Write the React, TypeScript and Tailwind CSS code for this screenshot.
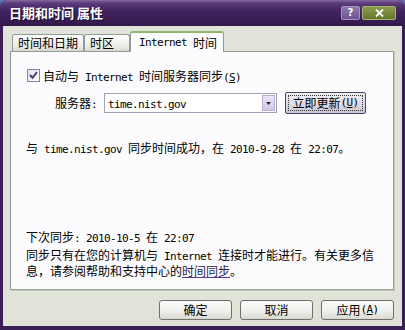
import React from "react";

const CJK = /([\u2E80-\u9FFF\u3000-\u303F\uFF00-\uFFEF]+)/;

function T({ s }: { s: string }) {
  const parts = s.split(CJK).filter((p) => p.length > 0);
  return (
    <>
      {parts.map((p, i) =>
        CJK.test(p) ? (
          <span key={i} className="font-['Noto_Sans_CJK_SC',sans-serif] text-[12px]">
            {p}
          </span>
        ) : (
          <span key={i} className="font-['DejaVu_Sans_Mono',monospace] text-[11px] tracking-[-0.62px] whitespace-pre">
            {p}
          </span>
        )
      )}
    </>
  );
}

function M({ children }: { children: React.ReactNode }) {
  return (
    <span className="font-['DejaVu_Sans_Mono',monospace] text-[11px] tracking-[-0.62px] whitespace-pre">{children}</span>
  );
}

function Tab({ label, w, active }: { label: string; w: string; active?: boolean }) {
  if (active) {
    return (
      <div
        className={`${w} h-[21px] mb-[-1px] relative z-10 bg-[#fcfcfe] border-x border-[#919b9c] border-t-[2px] border-t-[#8db86c] rounded-t-[3px] flex items-center pl-[8px] leading-[12px]`}
      >
        <T s={label} />
      </div>
    );
  }
  return (
    <div
      className={`${w} h-[17px] bg-[linear-gradient(to_bottom,#ffffff,#ecece6_70%,#d8d8d0)] border-x border-t border-[#919b9c] rounded-t-[3px] flex items-center pl-[5px] leading-[12px]`}
    >
      <T s={label} />
    </div>
  );
}

function Btn({ children }: { children: React.ReactNode }) {
  return (
    <div className="w-[73px] h-[20px] rounded-[3px] border border-[#6f6f6b] bg-[linear-gradient(to_bottom,#fbfbf9,#eeeeea_60%,#d9d9d2)] flex items-center justify-center leading-[12px]">
      {children}
    </div>
  );
}

export default function App() {
  return (
    <div className="w-[405px] h-[330px] bg-[#5476b8] font-['Noto_Sans_CJK_SC',sans-serif] text-black">
      <div className="w-[405px] h-[330px] rounded-t-[7px] bg-[#3a1e55] flex flex-col overflow-hidden">
        {/* Title bar */}
        <div className="h-[26px] shrink-0 flex items-center bg-[linear-gradient(to_bottom,#86689f_0%,#5c3c7a_12%,#422460_40%,#3a1d55_75%,#321849_100%)]">
          <span className="pl-[9px] text-white font-bold text-[13px] leading-[14px] [text-shadow:1px_1px_0_#1c0b2c]">
            日期和时间 属性
          </span>
          <div className="ml-auto flex items-center gap-[2px] mr-[9px]">
            <div className="w-[19px] h-[14px] rounded-[2px] border border-[#a898c0] bg-[linear-gradient(to_bottom,#8c78ac,#6a5590)] flex items-center justify-center text-white font-bold text-[10px] leading-[10px] font-['DejaVu_Sans',sans-serif]">
              ?
            </div>
            <div className="w-[34px] h-[14px] rounded-[2px] border border-[#a6b46a] bg-[linear-gradient(to_bottom,#8a9a4c,#66752e)] flex items-center justify-center">
              <svg width="9" height="8" viewBox="0 0 9 8">
                <path d="M1 0.5 L8 7.5 M8 0.5 L1 7.5" stroke="#ffffff" strokeWidth="1.8" />
              </svg>
            </div>
          </div>
        </div>

        {/* Body */}
        <div className="flex-1 mx-[3px] mb-[4px] bg-[#e0e4d8] pl-[7px] pr-[8px] pt-[6px] flex flex-col">
          {/* Tabs */}
          <div className="h-[19px] flex items-end pl-[2px]">
            <Tab label="时间和日期" w="w-[72px]" />
            <Tab label="时区" w="w-[46px]" />
            <Tab label="Internet 时间" w="w-[94px]" active />
          </div>

          {/* Panel */}
          <div className="h-[239px] border border-[#919b9c] bg-[#fcfcfe] shadow-[1px_1px_0_#c9cbbd] flex flex-col">
            {/* Row 1 */}
            <div className="mt-[17px] h-[13px] flex items-center pl-[16px] leading-[12px]">
              <div className="w-[13px] h-[13px] border border-[#8b80a8] bg-[linear-gradient(135deg,#e4e0ec,#ffffff)] flex items-center justify-center">
                <svg width="9" height="9" viewBox="0 0 9 9">
                  <path d="M1 4 L3.5 6.8 L8 1.2" stroke="#4a3a7e" strokeWidth="2" fill="none" />
                </svg>
              </div>
              <span className="ml-[3px]">
                <T s="自动与 Internet 时间服务器同步" />
                <M>
                  (<u>S</u>)
                </M>
              </span>
            </div>

            {/* Row 2 */}
            <div className="mt-[10px] h-[22px] flex items-center pl-[44px] leading-[12px]">
              <div className="w-[49px]">
                <T s="服务器: " />
              </div>
              <div className="w-[173px] h-[20px] border border-[#a89fbc] bg-white flex items-center">
                <span className="pl-[3px] flex-1">
                  <M>time.nist.gov</M>
                </span>
                <div className="w-[13px] h-[16px] mr-[1px] border border-[#b9aed0] bg-[linear-gradient(to_bottom,#ece6f4,#d2c8e2)] flex items-center justify-center">
                  <svg width="5" height="3" viewBox="0 0 5 3">
                    <path d="M0 0 H5 L2.5 3 Z" fill="#2c2244" />
                  </svg>
                </div>
              </div>
              <div className="ml-[8px] w-[81px] h-[22px] rounded-[2px] border border-[#4e4664] bg-[linear-gradient(to_bottom,#f0eef4,#dcd9e4_60%,#c8c4d4)] p-[2px]">
                <div className="w-full h-full border border-dotted border-[#333] flex items-center justify-center leading-[12px]">
                  <T s="立即更新" />
                  <M>
                    (<u>U</u>)
                  </M>
                </div>
              </div>
            </div>

            {/* Row 3 */}
            <div className="mt-[26px] h-[12px] leading-[12px] pl-[15px] whitespace-nowrap">
              <T s="与 time.nist.gov 同步时间成功，在 2010-9-28 在 22:07。" />
            </div>

            {/* Row 4 */}
            <div className="mt-[77px] h-[12px] leading-[12px] pl-[15px] whitespace-nowrap">
              <T s="下次同步: 2010-10-5 在 22:07" />
            </div>

            {/* Row 5 */}
            <div className="mt-[6px] leading-[12px] pl-[15px] whitespace-nowrap">
              <div>
                <T s="同步只有在您的计算机与 Internet 连接时才能进行。有关更多信" />
              </div>
              <div>
                <T s="息，请参阅帮助和支持中心的" />
                <span className="underline text-[#2a1a50] decoration-[#5a3c96]">
                  <T s="时间同步" />
                </span>
                <T s="。" />
              </div>
            </div>
          </div>

          {/* Bottom buttons */}
          <div className="mt-[10px] flex justify-end gap-[8px]">
            <Btn>
              <T s="确定" />
            </Btn>
            <Btn>
              <T s="取消" />
            </Btn>
            <Btn>
              <T s="应用" />
              <M>
                (<u>A</u>)
              </M>
            </Btn>
          </div>
        </div>
      </div>
    </div>
  );
}
